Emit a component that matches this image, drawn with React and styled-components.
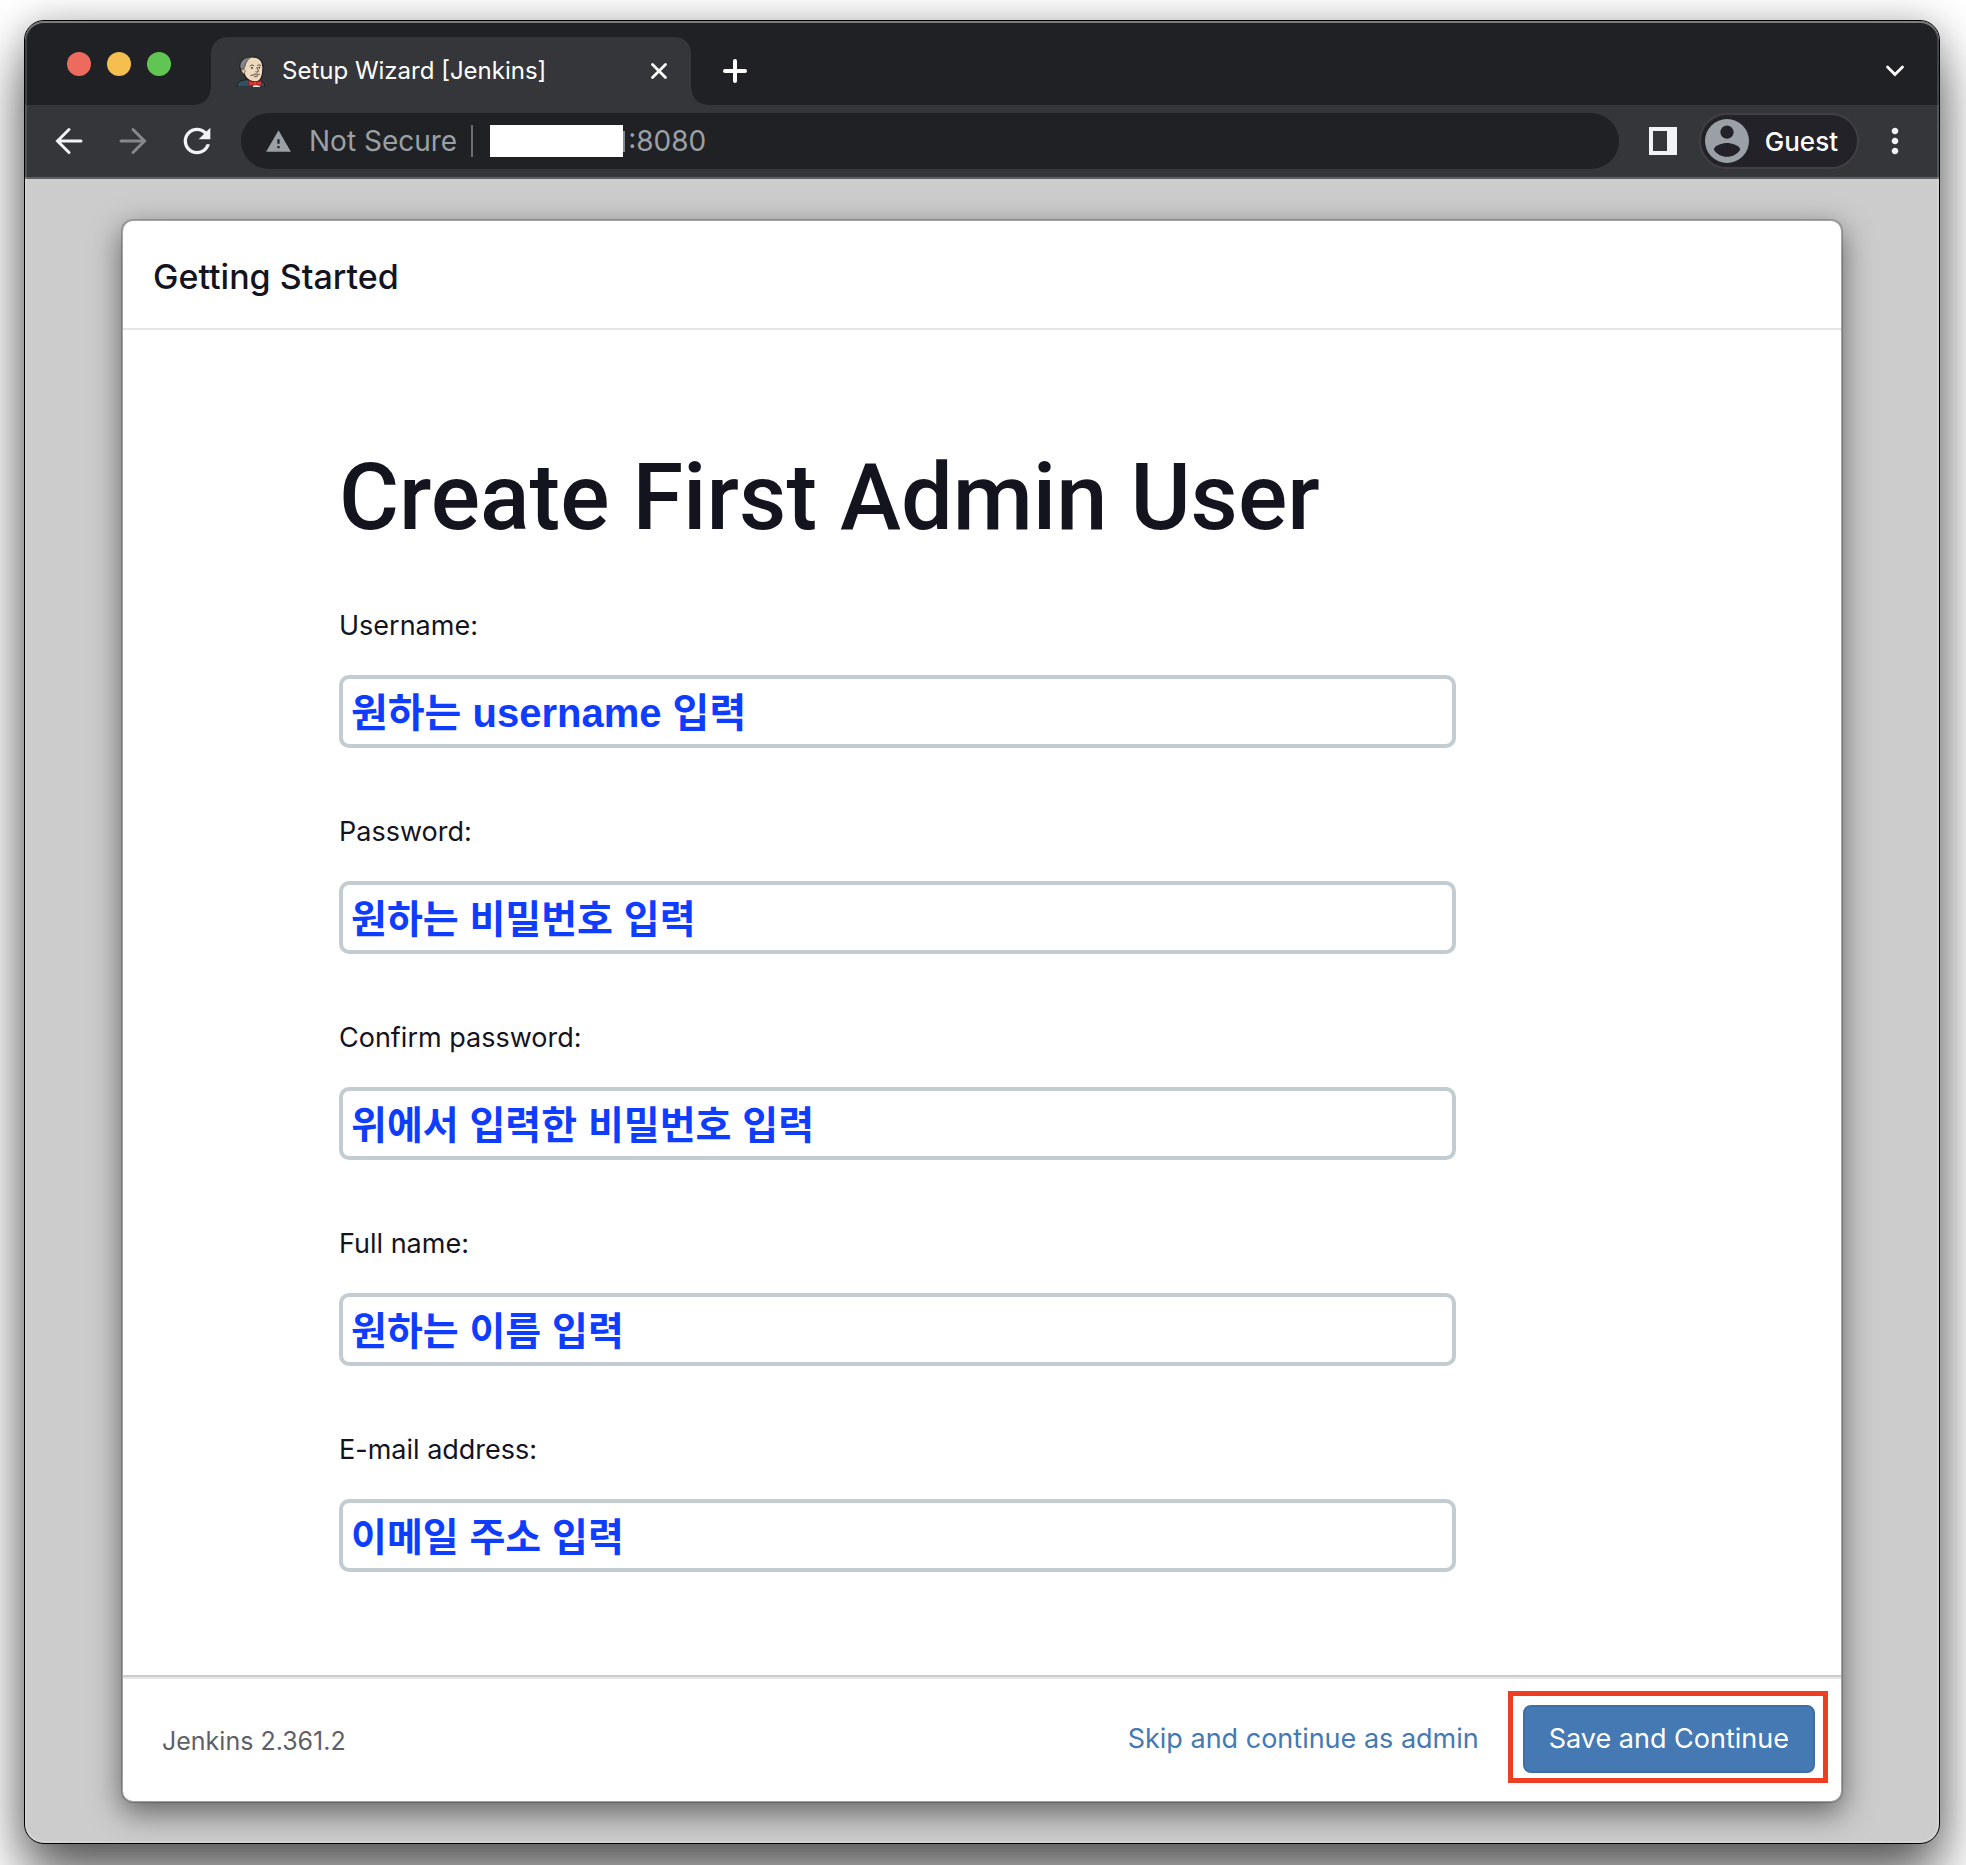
import React from "react";
import styled, { createGlobalStyle } from "styled-components";
import { MdRefresh, MdWarning, MdMoreVert } from "react-icons/md";

const sans = `Inter, "Liberation Sans", "Noto Sans CJK KR", sans-serif`;

const GlobalStyle = createGlobalStyle`
  *, *::before, *::after { box-sizing: border-box; }
  body { margin: 0; background: #fff; font-family: ${sans}; color: #14141f; }
  button, input { font: inherit; color: inherit; margin: 0; }
  button { padding: 0; border: 0; background: none; cursor: pointer; }
`;

const Desktop = styled.div`
  display: flex;
  min-height: 100vh;
  padding: 20px 26px 21px 24px;
  overflow: hidden;
`;

const Window = styled.div`
  position: relative;
  flex: 1;
  min-width: 0;
  display: flex;
  flex-direction: column;
  border: 1px solid #000;
  border-radius: 20px;
  overflow: hidden;
  background: #ccc;
  box-shadow: 0 36px 56px rgba(0, 0, 0, 0.6), 0 0 36px rgba(0, 0, 0, 0.22);

  &::after {
    content: "";
    position: absolute;
    inset: 0;
    border-radius: 19px;
    box-shadow: inset 0 2px 0 rgba(255, 255, 255, 0.3), inset 0 0 0 2px rgba(255, 255, 255, 0.16);
    pointer-events: none;
  }
`;

const TabStrip = styled.div`
  display: flex;
  align-items: flex-end;
  height: 84px;
  padding-right: 26px;
  background: #202124;
`;

const Lights = styled.div`
  display: flex;
  gap: 16px;
  align-self: center;
  padding: 2px 40px 0 42px;
`;

const Light = styled.button`
  width: 24px;
  height: 24px;
  border-radius: 50%;
  background: ${(p) => p.$color};
`;

const Tab = styled.div`
  position: relative;
  display: flex;
  align-items: center;
  width: 480px;
  height: 68px;
  padding: 0 22px 0 25px;
  border-radius: 16px 16px 0 0;
  background: #35363a;
  color: #fff;

  &::before,
  &::after {
    content: "";
    position: absolute;
    bottom: 0;
    width: 16px;
    height: 16px;
  }
  &::before {
    right: 100%;
    background: radial-gradient(circle at 0 0, transparent 15px, #35363a 16px);
  }
  &::after {
    left: 100%;
    background: radial-gradient(circle at 100% 0, transparent 15px, #35363a 16px);
  }
`;

const TabTitle = styled.span`
  flex: 1;
  padding-left: 16px;
  font-size: 24px;
  line-height: 32px;
  white-space: nowrap;
`;

const StripButton = styled.button`
  display: flex;
  align-items: center;
  justify-content: center;
  width: ${(p) => p.$width || 20}px;
  height: 68px;
  color: #fff;
`;

const Spacer = styled.div`
  flex: 1;
`;

const Toolbar = styled.div`
  display: flex;
  align-items: center;
  height: 74px;
  padding: 0 24px;
  background: #35363a;
  border-bottom: 2px solid #5f6063;
`;

const ToolButton = styled.button`
  display: flex;
  align-items: center;
  justify-content: center;
  width: 40px;
  height: 40px;
  color: ${(p) => (p.$dim ? "#87888a" : "#f1f3f4")};
`;

const NavButtons = styled.div`
  display: flex;
  gap: 24px;
  padding-right: 24px;
`;

const AddressBar = styled.div`
  flex: 1;
  min-width: 0;
  display: flex;
  align-items: center;
  height: 56px;
  padding: 0 24px;
  border-radius: 28px;
  background: #202124;
  color: #9aa0a6;
  font-size: 28px;
  line-height: 36px;
`;

const Security = styled.span`
  padding: 0 14px 0 17px;
  white-space: nowrap;
`;

const Divider = styled.span`
  width: 2px;
  height: 32px;
  margin-right: 17px;
  background: #6b6e72;
`;

const Redacted = styled.span`
  flex: none;
  width: 133px;
  height: 32px;
  background: #fff;
`;

const RedactedEdge = styled.span`
  flex: none;
  width: 2px;
  height: 21px;
  background: #85898d;
`;

const AddressInput = styled.input`
  flex: 1;
  min-width: 0;
  padding: 0 3px;
  border: 0;
  outline: 0;
  background: transparent;
`;

const SideButton = styled(ToolButton)`
  margin: 0 16px 0 24px;
`;

const Profile = styled.button`
  display: flex;
  align-items: center;
  gap: 16px;
  height: 56px;
  margin-right: 16px;
  padding: 0 19px 0 4px;
  border: 2px solid #403f45;
  border-radius: 28px;
  background: #232228;
  color: #fff;
  font-size: 26px;
  font-weight: 500;
`;

const Page = styled.main`
  flex: 1;
  display: flex;
  padding: 40px 96px;
`;

const Card = styled.section`
  flex: 1;
  display: flex;
  flex-direction: column;
  border: 2px solid rgba(0, 0, 0, 0.2);
  border-radius: 12px;
  background: #fff;
  background-clip: padding-box;
  box-shadow: 0 10px 30px rgba(0, 0, 0, 0.5);
`;

const CardHeader = styled.header`
  display: flex;
  align-items: center;
  height: 109px;
  padding: 4px 30px 0;
  border-bottom: 2px solid #e5e5e5;
`;

const CardTitle = styled.h2`
  margin: 0;
  font-size: 34px;
  line-height: 48px;
  font-weight: 500;
`;

const CardBody = styled.div`
  flex: 1;
  padding: 108px 385px 100px 216px;
`;

const Heading = styled.h1`
  margin: 0 0 48px;
  font-family: Roboto, ${sans};
  font-size: 92px;
  line-height: 120px;
  font-weight: 500;
  white-space: nowrap;
`;

const Form = styled.form`
  display: flex;
  flex-direction: column;
  gap: 64px;
`;

const Field = styled.div`
  display: flex;
  flex-direction: column;
  gap: 29px;
`;

const Label = styled.label`
  font-size: 27px;
  line-height: 40px;
`;

const TextInput = styled.input`
  width: 100%;
  height: 73px;
  padding: 0 8px 4px;
  border: 4px solid #c3ccd1;
  border-radius: 10px;
  outline: 0;
  background: #fff;
  color: #0f3dff;
  font-family: "Liberation Sans", "Noto Sans CJK KR", sans-serif;
  font-size: ${(p) => (p.$mixed ? 40 : 39)}px;
  font-weight: 700;
`;

const CardFooter = styled.footer`
  display: flex;
  align-items: center;
  justify-content: space-between;
  height: 126px;
  padding: 0 13px 4px 39px;
  border-top: 2px solid #ccc;
  box-shadow: inset 0 2px 0 #e5e5e5;
`;

const Version = styled.span`
  padding-top: 8px;
  color: #5f5f68;
  font-size: 25px;
  line-height: 36px;
`;

const Actions = styled.div`
  display: flex;
  align-items: baseline;
  gap: 29px;
  font-size: 27px;
  line-height: 36px;
`;

const SkipLink = styled.a`
  color: #4479b3;
  text-decoration: none;
`;

const Highlight = styled.div`
  padding: 9px 8px 5px 10px;
  border: 5px solid #ee3e24;
`;

const SaveButton = styled.button`
  display: block;
  height: 68px;
  padding: 0 24px;
  border: 2px solid #3d6fa6;
  border-radius: 8px;
  background: #4479b3;
  color: #fff;
`;

const ArrowIcon = ({ d }) => (
  <svg width="40" height="40" viewBox="0 0 40 40" aria-hidden="true">
    <path d={d} fill="none" stroke="currentColor" strokeWidth="3" strokeLinecap="round" />
  </svg>
);

const JenkinsIcon = () => (
  <svg width="30" height="32" viewBox="0 0 30 32" aria-hidden="true">
    <path d="M1 32c0-3.500 1.500-5.500 5-6.500l5-1 10 1 5 1c2 1 3 3 3 5.500z" fill="#335061" stroke="#1b1d22" />
    <path d="M4 12C3.500 5 9 1.800 15.500 1.800 23 1.800 27 6 27 12.500c0 5.500-.7 10.500-3.500 13-2.200 1.900-6.500 1.800-9.500.3C10 23.800 8.500 21 8 18.500 5.500 18 4.300 15 4 12z" fill="#efd9be" stroke="#231f20" strokeWidth="1.300" />
    <path d="M15 2.300C8.500 2 3.800 6 4 12l1.500 2.500 2.500-1c1.200-1.500.8-3.500 1.800-5C11 6.500 11.500 4 15 2.300z" fill="#84858b" stroke="#2b2b2f" strokeWidth=".7" />
    <path d="M6 14.500c1.500-1.200 3.200-.2 3 1.800l-.7 2.500c-2-.5-3-2.500-2.300-4.300z" fill="#efd9be" stroke="#5f4c3e" strokeWidth=".8" />
    <path d="M14 11c1-1.200 2.700-1.400 3.700-.4M21.500 10.500c1-1 2.500-.8 3.300.2M20.800 12.500c.3 2 2.400 3.200 1.300 4.300-.6.5-1.600.3-2.100 0M15 20.500c2 .2 3-1.800 5-1.500 1.200.2 2 .8 3.500.2" fill="none" stroke="#51433a" strokeWidth="1" strokeLinecap="round" />
    <path d="M17 20.500c1.500.4 4 .2 5.200-.6.3 2.600-3.500 3.800-5.200.6z" fill="#8d7365" />
    <circle cx="16" cy="12.900" r=".9" fill="#231f20" />
    <circle cx="23.300" cy="12.600" r=".9" fill="#231f20" />
    <path d="M17 29l3-1 4 1v3h-7z" fill="#f3f1ee" />
    <path d="M12.500 25.500l6.500 2 6-2 .8 5.500-6.300-1.500-6.500 2z" fill="#d33833" stroke="#6e1d1b" strokeWidth=".8" strokeLinejoin="round" />
    <rect x="17.500" y="26.500" width="3.200" height="3.600" rx=".8" fill="#ef3d3a" stroke="#8c2321" strokeWidth=".5" />
  </svg>
);

const fields = [
  { id: "username", label: "Username:", value: "원하는 username 입력", mixed: true },
  { id: "password1", label: "Password:", value: "원하는 비밀번호 입력" },
  { id: "password2", label: "Confirm password:", value: "위에서 입력한 비밀번호 입력" },
  { id: "fullname", label: "Full name:", value: "원하는 이름 입력" },
  { id: "email", label: "E-mail address:", value: "이메일 주소 입력" },
];

export default function App() {
  return (
    <>
      <GlobalStyle />
      <Desktop>
        <Window>
          <TabStrip>
            <Lights>
              <Light $color="#ed6a5e" aria-label="Close window" />
              <Light $color="#f5bf4f" aria-label="Minimize window" />
              <Light $color="#61c554" aria-label="Zoom window" />
            </Lights>
            <Tab>
              <JenkinsIcon />
              <TabTitle>Setup Wizard [Jenkins]</TabTitle>
              <StripButton aria-label="Close tab">
                <svg width="20" height="20" viewBox="0 0 20 20">
                  <path d="M3.500 3.500l13 13M16.500 3.500l-13 13" stroke="currentColor" strokeWidth="2.800" strokeLinecap="round" />
                </svg>
              </StripButton>
            </Tab>
            <StripButton $width={88} aria-label="New tab">
              <svg width="26" height="26" viewBox="0 0 26 26">
                <path d="M13 3v20M3 13h20" stroke="currentColor" strokeWidth="4" strokeLinecap="round" />
              </svg>
            </StripButton>
            <Spacer />
            <StripButton $width={36} aria-label="Search tabs">
              <svg width="20" height="12" viewBox="0 0 20 12">
                <path d="M2.500 2l7.500 7.500L17.500 2" fill="none" stroke="currentColor" strokeWidth="2.800" strokeLinecap="round" />
              </svg>
            </StripButton>
          </TabStrip>
          <Toolbar>
            <NavButtons>
              <ToolButton aria-label="Back">
                <ArrowIcon d="M32 20H9M20 8.500L8.500 20 20 31.500" />
              </ToolButton>
              <ToolButton $dim aria-label="Forward">
                <ArrowIcon d="M8 20h23M20 8.500L31.500 20 20 31.500" />
              </ToolButton>
              <ToolButton aria-label="Reload">
                <MdRefresh size={40} />
              </ToolButton>
            </NavButtons>
            <AddressBar>
              <MdWarning size={27} />
              <Security>Not Secure</Security>
              <Divider />
              <Redacted />
              <RedactedEdge />
              <AddressInput aria-label="Address" defaultValue=":8080" />
            </AddressBar>
            <SideButton aria-label="Side panel">
              <svg width="28" height="28" viewBox="0 0 28 28">
                <path fillRule="evenodd" d="M0 0h28v28H0zM4 4v20h14V4z" fill="currentColor" />
              </svg>
            </SideButton>
            <Profile>
              <svg width="44" height="44" viewBox="2 2 20 20" aria-hidden="true">
                <circle cx="12" cy="12" r="10" fill="#9aa0a6" />
                <circle cx="12" cy="8" r="3" fill="#232228" />
                <path d="M12 19.200c-2.500 0-4.710-1.280-6-3.220.03-1.990 4-3.080 6-3.080 1.990 0 5.970 1.090 6 3.080-1.290 1.940-3.500 3.220-6 3.220z" fill="#232228" />
              </svg>
              Guest
            </Profile>
            <ToolButton aria-label="Menu">
              <MdMoreVert size={40} />
            </ToolButton>
          </Toolbar>
          <Page>
            <Card>
              <CardHeader>
                <CardTitle>Getting Started</CardTitle>
              </CardHeader>
              <CardBody>
                <Heading>Create First Admin User</Heading>
                <Form id="setup" onSubmit={(e) => e.preventDefault()}>
                  {fields.map((f) => (
                    <Field key={f.id}>
                      <Label htmlFor={f.id}>{f.label}</Label>
                      <TextInput id={f.id} type="text" defaultValue={f.value} $mixed={f.mixed} />
                    </Field>
                  ))}
                </Form>
              </CardBody>
              <CardFooter>
                <Version>Jenkins 2.361.2</Version>
                <Actions>
                  <SkipLink href="#skip">Skip and continue as admin</SkipLink>
                  <Highlight>
                    <SaveButton type="submit" form="setup">Save and Continue</SaveButton>
                  </Highlight>
                </Actions>
              </CardFooter>
            </Card>
          </Page>
        </Window>
      </Desktop>
    </>
  );
}
